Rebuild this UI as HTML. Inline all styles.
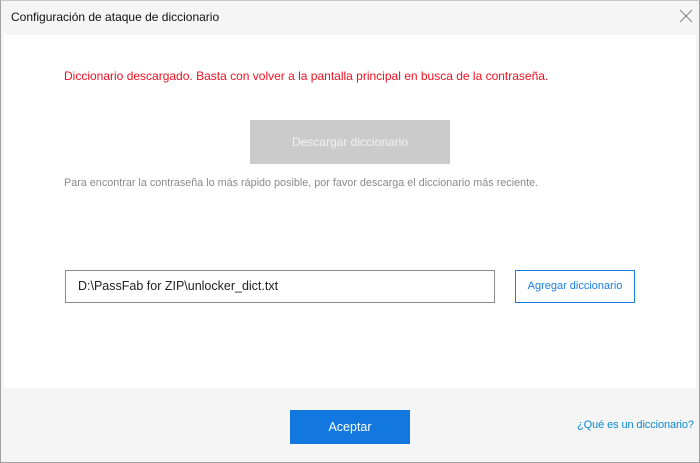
<!DOCTYPE html>
<html><head><meta charset="utf-8"><style>
*{margin:0;padding:0;box-sizing:border-box}
body{width:700px;height:463px;background:#f5f5f5;font-family:"Liberation Sans",sans-serif;position:relative;overflow:hidden}
div{white-space:nowrap}
.frame{position:absolute;left:0;top:0;width:700px;height:463px;border:1px solid #a0a0a0;border-top-color:#c8c8c8}
.title{position:absolute;left:11px;top:10px;font-size:12px;color:#111}
.close{position:absolute;left:679px;top:9px;width:14px;height:14px}
.content{position:absolute;left:4px;top:35px;width:692px;height:353px;background:#fff}
.red{position:absolute;left:64px;top:69px;font-size:12px;color:#f01020}
.gbtn{position:absolute;left:250px;top:120px;width:200px;height:44px;background:#cbcbcb;color:#f2f2f2;font-size:12px;text-align:center;line-height:44px}
.hint{position:absolute;left:64px;top:177px;font-size:10.8px;color:#8a8a8a}
.input{position:absolute;left:65px;top:270px;width:430px;height:33px;border:1px solid #8c8c8c;font-size:12.5px;color:#222;padding-left:12px;line-height:31px}
.add{position:absolute;left:515px;top:270px;width:120px;height:33px;border:1px solid #1a7ee0;color:#1a7ee0;font-size:11px;text-align:center;line-height:31px}
.ok{position:absolute;left:290px;top:410px;width:120px;height:34px;background:#1277df;color:#fff;font-size:12.5px;text-align:center;line-height:34px}
.link{position:absolute;left:577px;top:419px;font-size:11px;color:#0b8ad0;letter-spacing:-0.1px}
</style></head><body>
<div class="frame"></div>
<div class="title">Configuración de ataque de diccionario</div>
<svg class="close" viewBox="0 0 14 14"><path d="M1 1L13 13M13 1L1 13" stroke="#888" stroke-width="1.1"/></svg>
<div class="content"></div>
<div class="red">Diccionario descargado. Basta con volver a la pantalla principal en busca de la contraseña.</div>
<div class="gbtn">Descargar diccionario</div>
<div class="hint">Para encontrar la contraseña lo más rápido posible, por favor descarga el diccionario más reciente.</div>
<div class="input">D:\PassFab for ZIP\unlocker_dict.txt</div>
<div class="add">Agregar diccionario</div>
<div class="ok">Aceptar</div>
<div class="link">¿Qué es un diccionario?</div>
</body></html>
